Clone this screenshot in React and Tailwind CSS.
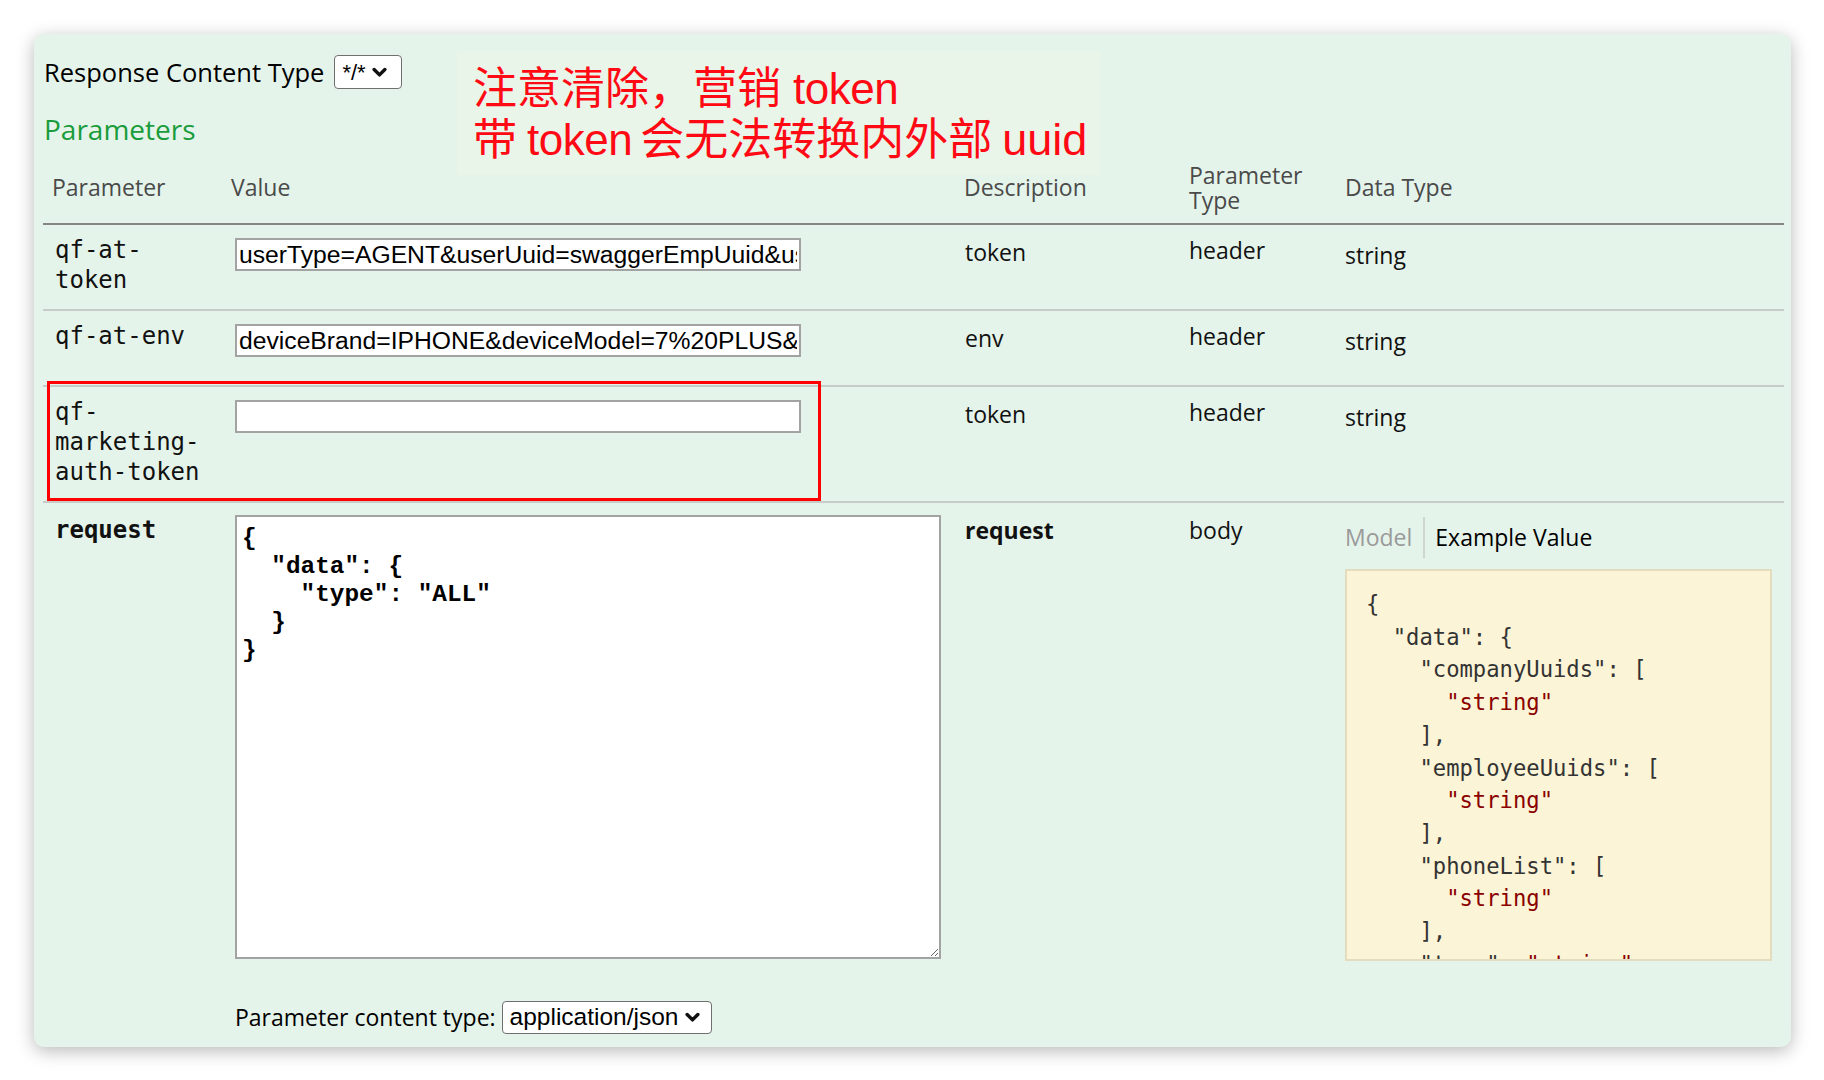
import React from "react";

const sans = { fontFamily: '"Open Sans", "Noto Sans", sans-serif' };

const rows = [
  {
    name: "qf-at-token",
    value: "userType=AGENT&userUuid=swaggerEmpUuid&userName=swagger",
    desc: "token",
  },
  {
    name: "qf-at-env",
    value: "deviceBrand=IPHONE&deviceModel=7%20PLUS&deviceType=IOS",
    desc: "env",
  },
  { name: "qf-marketing-auth-token", value: "", desc: "token", marked: true },
];

const example = [
  ["{"],
  ['  "data": {'],
  ['    "companyUuids": ['],
  ["      ", '"string"'],
  ["    ],"],
  ['    "employeeUuids": ['],
  ["      ", '"string"'],
  ["    ],"],
  ['    "phoneList": ['],
  ["      ", '"string"'],
  ["    ],"],
  ['    "type": ', '"string"'],
  ["  }"],
  ["}"],
];

function Chevron({ className }) {
  return (
    <svg viewBox="0 0 14 10" className={className}>
      <path d="M2 2.2 L7 7.2 L12 2.2" fill="none" stroke="#111" strokeWidth="3.2" strokeLinecap="round" strokeLinejoin="round" />
    </svg>
  );
}

function FakeSelect({ label, className }) {
  return (
    <div
      className={`flex items-center gap-[6px] rounded-[4px] border border-[#6f6f6f] bg-white pl-[7px] pr-[5px] text-black ${className}`}
      style={{ fontFamily: '"Liberation Sans", Arial, sans-serif' }}>
      <span>{label}</span>
      <Chevron className="w-[15px] h-[11px]" />
    </div>
  );
}

const grid = "grid grid-cols-[180px_730px_224px_156px_1fr]";

export default function App() {
  return (
    <div className="w-[1824px] h-[1080px] bg-white pt-[34px] pl-[34px]">
      <div
        className="relative w-[1757px] h-[1013px] rounded-[10px] bg-[#e5f4ea] pl-[9px] pr-[7px] shadow-[0_4px_18px_rgba(0,0,0,0.28)]"
        style={sans}>
        {/* top: response content type + heading */}
        <div className="pt-[21px] pl-[1px] flex items-center gap-[10px]">
          <span className="text-[25.5px] leading-[34px] text-black">Response Content Type</span>
          <FakeSelect label="*/*" className="w-[68px] h-[34px] text-[22px]" />
        </div>
        <h4 className="mt-[23px] pl-[1px] text-[28px] leading-[34px] text-[#199c3b]">Parameters</h4>

        {/* pasted annotation */}
        <div
          className="absolute left-[423px] top-[17px] w-[643px] h-[124px] bg-[#e9f5e9] pl-[16px] pt-[12px] text-[44px] leading-[51px] text-[#ff0a14]"
          style={{ fontFamily: '"Liberation Sans", "Noto Sans CJK SC", sans-serif' }}>
          <div>
            注意清除，营销<span className="ml-[12px] tracking-[-0.5px]">token</span>
          </div>
          <div>
            带<span className="ml-[10px] mr-[8px] tracking-[-0.5px]">token</span>会无法转换内外部
            <span className="ml-[10px] text-[45px]">uuid</span>
          </div>
        </div>

        {/* table */}
        <div>
          <div className={`${grid} items-center h-[79px] pt-[6px] border-b-2 border-[#858585] text-[23px] leading-[25px] text-[#4a4a4a]`}>
            <div className="pl-[9px]">Parameter</div>
            <div className="pl-[8px]">Value</div>
            <div className="pl-[11px]">Description</div>
            <div className="pl-[12px]">
              Parameter
              <br />
              Type
            </div>
            <div className="pl-[12px]">Data Type</div>
          </div>

          {rows.map((r) => (
            <div
              key={r.name}
              className={`relative ${grid} pt-[10px] pb-[14px] border-b-2 border-[#c7ccc9] text-[23px] text-[#111]`}>
              {r.marked && (
                <div className="absolute left-[4px] top-[-6px] w-[774px] h-[120px] border-[3px] border-[#ff0000] pointer-events-none" />
              )}
              <div
                className="pl-[12px] pr-[14px] text-[24px] leading-[30px] break-words"
                style={{ fontFamily: '"DejaVu Sans Mono", monospace' }}>
                {r.name}
              </div>
              <div className="pl-[12px] h-[50px]">
                <input
                  readOnly
                  value={r.value}
                  className="mt-[3px] w-[566px] h-[33px] border-2 border-[#a3a3a3] bg-white px-[2px] text-[24.7px] text-black outline-none"
                  style={{ fontFamily: '"Liberation Sans", Arial, sans-serif' }}
                />
              </div>
              <div className="pl-[12px] leading-[30px] pt-[2px]">{r.desc}</div>
              <div className="pl-[12px] leading-[30px]">header</div>
              <div className="pl-[12px] leading-[30px] pt-[5px]">string</div>
            </div>
          ))}

          {/* body parameter */}
          <div className={`${grid} pt-[12px] text-[23px] text-[#111]`}>
            <div
              className="pl-[12px] text-[24px] leading-[30px] font-bold"
              style={{ fontFamily: '"DejaVu Sans Mono", monospace' }}>
              request
            </div>
            <div className="pl-[12px]">
              <textarea
                readOnly
                defaultValue={'{\n  "data": {\n    "type": "ALL"\n  }\n}'}
                className="block w-[706px] h-[444px] border-2 border-[#a3a3a3] bg-white pl-[5px] pt-[8px] text-[24.4px] leading-[28px] font-bold text-black outline-none"
                style={{ fontFamily: '"Liberation Mono", "Courier New", monospace' }}
              />
              <div className="mt-[42px] flex items-center gap-[6px]">
                <span className="text-[23px] leading-[33px] text-black">Parameter content type:</span>
                <FakeSelect label="application/json" className="w-[210px] h-[33px] text-[24.5px]" />
              </div>
            </div>
            <div className="pl-[12px] leading-[30px] font-bold">request</div>
            <div className="pl-[12px] leading-[30px]">body</div>
            <div className="pl-[12px]">
              <div className="flex items-center h-[41px] mt-[2px] text-[23px]">
                <span className="pr-[11px] text-[#9a9a9a]">Model</span>
                <span className="pl-[10px] border-l-2 border-[#cfd6d1] text-black h-[41px] flex items-center">Example Value</span>
              </div>
              <div
                className="mt-[11px] w-[427px] h-[392px] overflow-hidden border-2 border-[#e4ddbd] bg-[#fbf4d6] pl-[19px] pt-[17px] text-[22.2px] leading-[32.7px] text-[#333] whitespace-pre"
                style={{ fontFamily: '"DejaVu Sans Mono", monospace' }}>
                {example.map((line, i) => (
                  <div key={i}>
                    {line[0]}
                    {line[1] && <span className="text-[#8a0000]">{line[1]}</span>}
                  </div>
                ))}
              </div>
            </div>
          </div>
        </div>
      </div>
    </div>
  );
}
